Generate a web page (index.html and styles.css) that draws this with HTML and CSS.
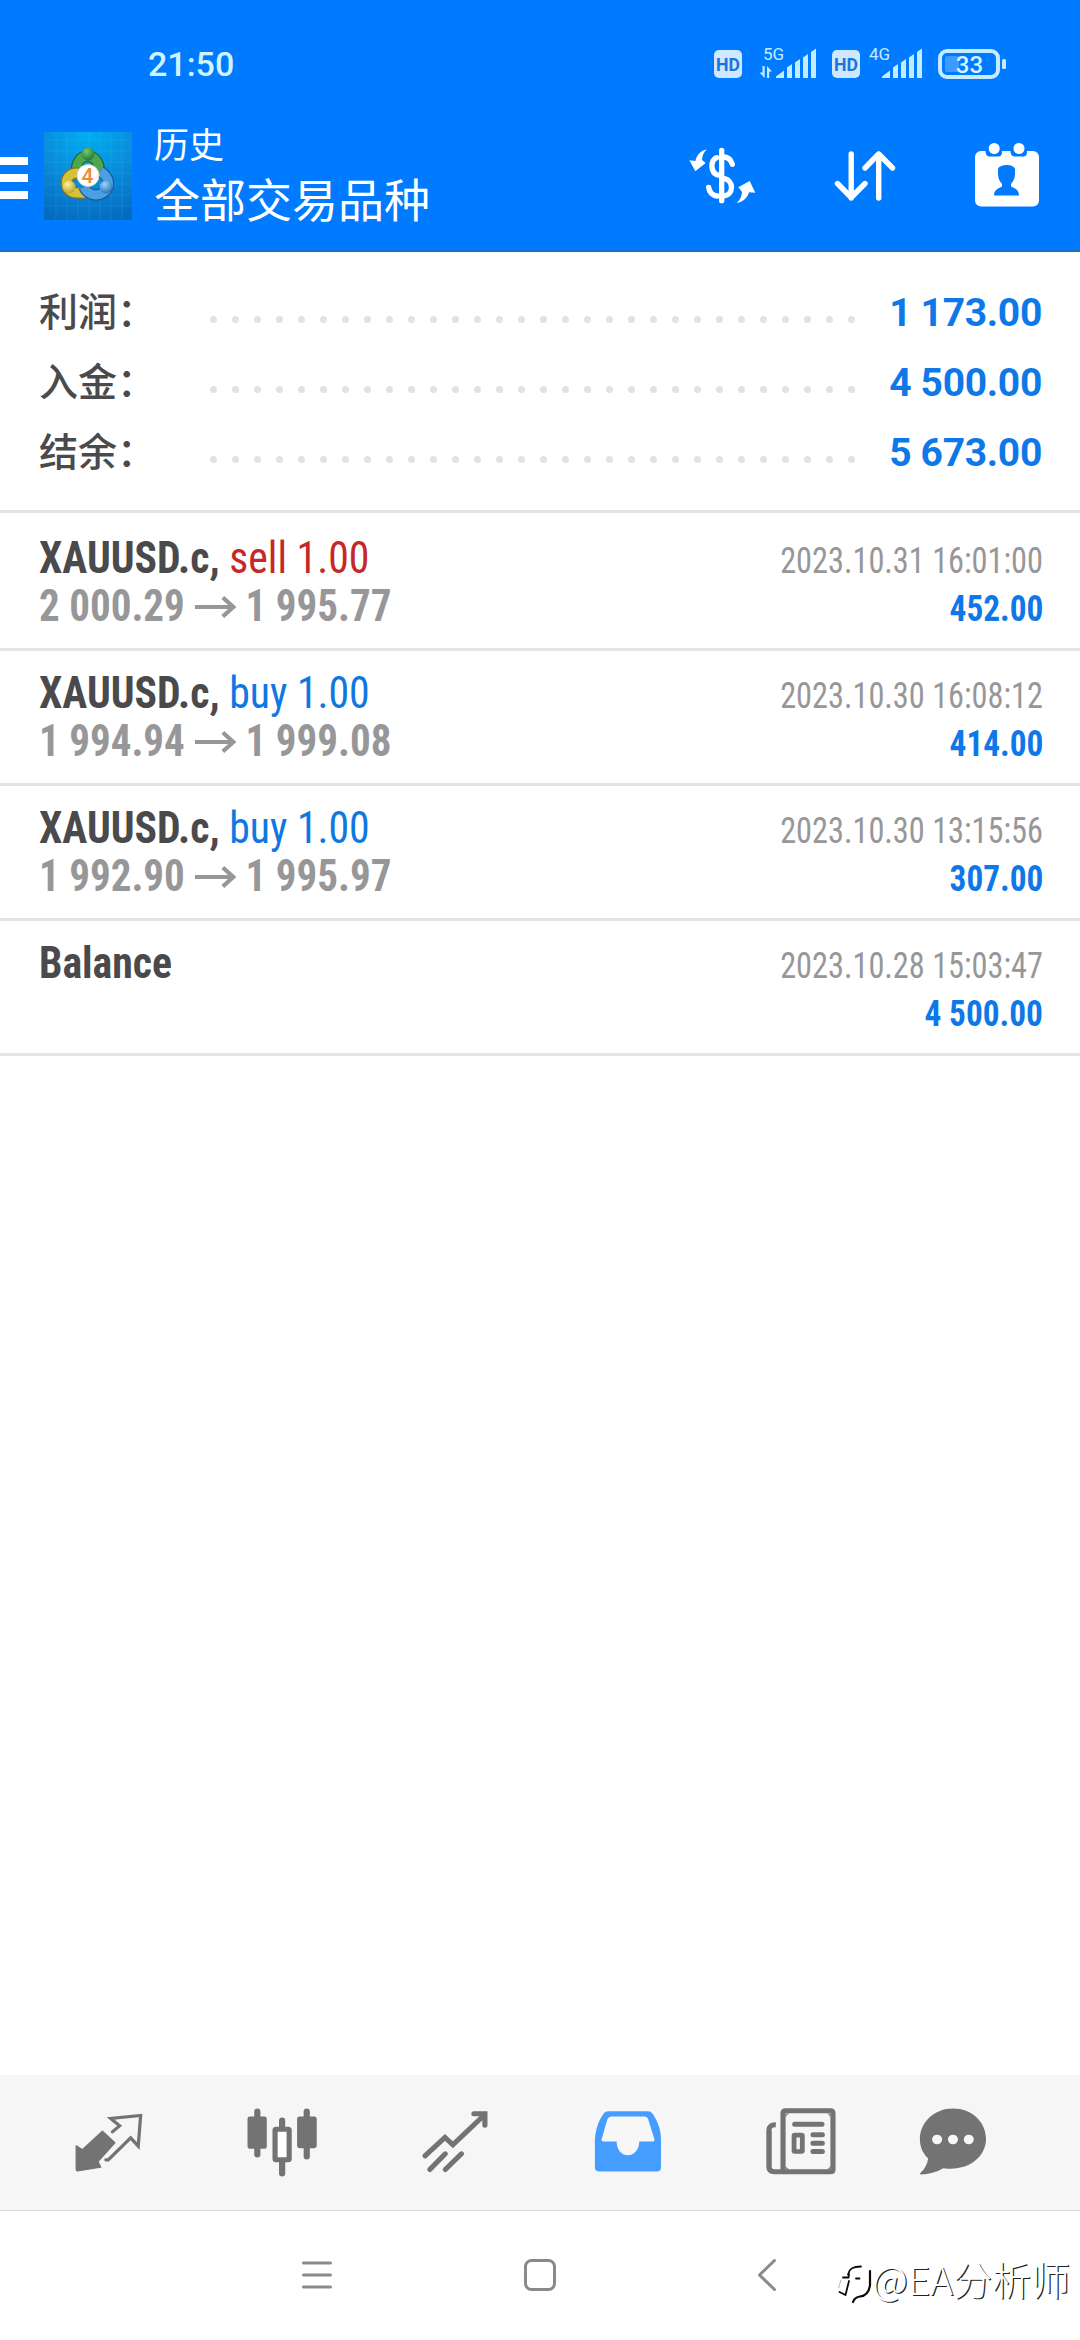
FILE: index.html
```html
<!DOCTYPE html>
<html lang="zh-CN">
<head>
<meta charset="utf-8">
<title>历史</title>
<link rel="stylesheet" href="styles.css">
</head>
<body>
<div class="screen">
  <header class="top">
    <div class="status">
      <span class="clock">21:50</span>
      <svg class="status-icons" viewBox="704 40 312 48" width="312" height="48">
        <g fill="#cfe8ff">
          <rect x="714" y="50" width="28" height="28" rx="5"/>
          <rect x="832" y="50" width="28" height="28" rx="5"/>
        </g>
        <g class="hd"><text x="728" y="70.500" textLength="24" lengthAdjust="spacingAndGlyphs">HD</text><text x="846" y="70.500" textLength="24" lengthAdjust="spacingAndGlyphs">HD</text></g>
        <g class="net"><text x="763" y="59.500">5G</text><text x="869" y="59.500">4G</text></g>
        <g fill="#c4ecff">
          <path d="M776 78V76.500L784 70.500V78ZM787 78V67.500L792 64V78ZM795 78V62.500L800 59V78ZM803 78V57.500L808 54V78ZM811 78V52L816 48.500V78Z"/>
          <path d="M882 78V76.500L890 70.500V78ZM893 78V67.500L898 64V78ZM901 78V62.500L906 59V78ZM909 78V57.500L914 54V78ZM917 78V52L922 48.500V78Z"/>
          <path d="M762.500 66H764.700V78L759.500 72.500H762.500ZM767 78V66L772 71.500H769.200V78Z"/>
          <rect x="1002" y="59" width="4" height="10" rx="1.500"/>
        </g>
        <rect x="945" y="56" width="14" height="16" rx="2" fill="#3d9aff"/>
        <rect x="940" y="51" width="58" height="26" rx="7" fill="none" stroke="#c4ecff" stroke-width="4"/>
        <text class="level" x="969.500" y="73">33</text>
      </svg>
    </div>
    <div class="appbar">
      <div class="burger"><i></i><i></i><i></i></div>
      <svg class="logo" viewBox="0 0 88 88" width="88" height="88">
        <defs>
          <radialGradient id="sky" cx=".5" cy="0" r="1.100"><stop offset="0" stop-color="#00aef2"/><stop offset=".5" stop-color="#0a8bdb"/><stop offset="1" stop-color="#0467bd"/></radialGradient>
          <radialGradient id="gr" cx=".4" cy=".3" r=".8"><stop offset="0" stop-color="#7cc474"/><stop offset="1" stop-color="#14702c"/></radialGradient>
          <radialGradient id="ye" cx=".4" cy=".3" r=".8"><stop offset="0" stop-color="#fff0a0"/><stop offset="1" stop-color="#b59a10"/></radialGradient>
          <radialGradient id="bl" cx=".4" cy=".3" r=".8"><stop offset="0" stop-color="#9ad4fa"/><stop offset="1" stop-color="#1868b4"/></radialGradient>
        </defs>
        <rect width="88" height="88" fill="url(#sky)"/>
        <path d="M12 0V88M23 0V88M34 0V88M45 0V88M56 0V88M67 0V88M78 0V88M0 8H88M0 19H88M0 30H88M0 41H88M0 52H88M0 63H88M0 74H88" stroke="#4cc4f4" stroke-opacity=".16"/>
        <path d="M33 42C29 18 58 18 55 42" fill="none" stroke="#1d6a35" stroke-width="11.500"/>
        <path d="M33 42C29 18 58 18 55 42" fill="none" stroke="#4fa64f" stroke-width="9"/>
        <path d="M34 41C19 40 18 61 34 61H42" fill="none" stroke="#84771a" stroke-width="11.500"/>
        <path d="M34 41C19 40 18 61 34 61H42" fill="none" stroke="#d6c23a" stroke-width="9"/>
        <path d="M40 55C46 69 68 63 64 48C62 43 60 42 56 39" fill="none" stroke="#175a9d" stroke-width="11.500"/>
        <path d="M40 55C46 69 68 63 64 48C62 43 60 42 56 39" fill="none" stroke="#4c9fe0" stroke-width="9"/>
        <circle cx="44" cy="22" r="6.500" fill="url(#gr)"/>
        <circle cx="25" cy="55" r="6.500" fill="url(#ye)"/>
        <circle cx="62" cy="55" r="6.500" fill="url(#bl)"/>
        <circle cx="44" cy="43.500" r="11" fill="#fff" stroke="#d9d5c5" stroke-width="1"/>
        <text class="four" x="43.500" y="51">4</text>
      </svg>
      <div class="titles">
        <div class="title">历史</div>
        <div class="subtitle">全部交易品种</div>
      </div>
      <div class="actions">
        <svg viewBox="0 0 270 240" width="90" height="80" fill="none" stroke="#fff" stroke-width="16" stroke-linecap="round">
          <path d="M125 46V197"/>
          <path d="M157 88C153 74 142 66 129 66M110 68C91 74 90 112 113 120M129 130C164 134 162 182 129 183M86 157C88 172 98 181 112 183"/>
          <path d="M81 43C71 51 67 62 66 75L77 84L46 109L28 76L46 78C51 60 61 47 81 43ZM170 204C180 196 185 185 186 171L175 157L209 138L226 173L207 172C202 189 190 201 170 204Z" fill="#fff" stroke="none"/>
        </svg>
        <svg viewBox="825 135 80 80" width="80" height="80" fill="none" stroke="#fff" stroke-width="5.400" stroke-linecap="round" stroke-linejoin="round">
          <path d="M851.200 154V198M837.500 183.500L851.200 197.500L865 183.500M878.700 198V154M865 168L878.700 154L892.500 168"/>
        </svg>
        <svg viewBox="967 135 80 80" width="80" height="80">
          <rect x="975" y="151" width="64" height="55.500" rx="6" fill="#fff"/>
          <path d="M985.500 151V152Q986 156.500 990 156.500H998Q1002 156.500 1002 152V151ZM1010.500 151V152Q1011 156.500 1015 156.500H1023Q1027 156.500 1027 152V151Z" fill="#007aff"/>
          <circle cx="994.200" cy="148.500" r="5.500" fill="#fff"/><circle cx="1019" cy="148.500" r="5.500" fill="#fff"/>
          <path d="M994 195.500C994 190 998 188.500 1002 186.500V184C999.500 181 998 178 998 174V169C999 166 1003 165 1007 165C1011 165 1014 166.500 1015 169V174C1015 178 1013.500 181 1011 184V186.500C1015 188.500 1019 190 1019 195.500Z" fill="#007aff"/>
        </svg>
      </div>
    </div>
  </header>

  <section class="summary">
    <div class="sum"><span class="label">利润：</span><svg class="dots" width="645" height="70"><path d="M3.500 41.500H645"/></svg><span class="value">1 173.00</span></div>
    <div class="sum"><span class="label">入金：</span><svg class="dots" width="645" height="70"><path d="M3.500 41.500H645"/></svg><span class="value">4 500.00</span></div>
    <div class="sum"><span class="label">结余：</span><svg class="dots" width="645" height="70"><path d="M3.500 41.500H645"/></svg><span class="value">5 673.00</span></div>
  </section>

  <main class="deals">
    <article class="deal">
      <div class="line"><span class="symbol">XAUUSD.c, <span class="sell">sell 1.00</span></span><time>2023.10.31 16:01:00</time></div>
      <div class="line"><span class="prices">2 000.29<svg class="arrow" viewBox="0 0 42 24" preserveAspectRatio="none"><path d="M0 12H39M28 2.500L38.500 12L28 21.500"/></svg>1 995.77</span><span class="profit">452.00</span></div>
    </article>
    <article class="deal">
      <div class="line"><span class="symbol">XAUUSD.c, <span class="buy">buy 1.00</span></span><time>2023.10.30 16:08:12</time></div>
      <div class="line"><span class="prices">1 994.94<svg class="arrow" viewBox="0 0 42 24" preserveAspectRatio="none"><path d="M0 12H39M28 2.500L38.500 12L28 21.500"/></svg>1 999.08</span><span class="profit">414.00</span></div>
    </article>
    <article class="deal">
      <div class="line"><span class="symbol">XAUUSD.c, <span class="buy">buy 1.00</span></span><time>2023.10.30 13:15:56</time></div>
      <div class="line"><span class="prices">1 992.90<svg class="arrow" viewBox="0 0 42 24" preserveAspectRatio="none"><path d="M0 12H39M28 2.500L38.500 12L28 21.500"/></svg>1 995.97</span><span class="profit">307.00</span></div>
    </article>
    <article class="deal">
      <div class="line"><span class="symbol">Balance</span><time>2023.10.28 15:03:47</time></div>
      <div class="line"><span class="prices">&nbsp;</span><span class="profit">4 500.00</span></div>
    </article>
  </main>

  <nav class="tabs">
    <svg viewBox="199 127.500 232.300 240" preserveAspectRatio="none">
      <path d="M296 212L332 247L283 303L291 320L224 331Q220 331 220 326V256L238 268Z" fill="#737373" stroke="#737373" stroke-width="4" stroke-linejoin="round"/>
      <path d="M325 214L346 196L320 174L407 165L400 257L378 232L313 298H306" fill="none" stroke="#737373" stroke-width="9.500" stroke-linecap="round" stroke-linejoin="miter"/>
    </svg>
    <svg viewBox="700 127.500 232.300 240" preserveAspectRatio="none">
      <path d="M744.500 153V282M888 153V288M816.500 180V205M816.500 300V339" stroke="#737373" stroke-width="18" stroke-linecap="round"/>
      <rect x="716" y="168" width="56" height="97" rx="7" fill="#737373"/><rect x="860" y="168" width="57" height="95" rx="7" fill="#737373"/>
      <rect x="796" y="206" width="41" height="92" rx="3" fill="#fff" stroke="#737373" stroke-width="15"/>
    </svg>
    <svg viewBox="1202 127.500 232.300 240" preserveAspectRatio="none" fill="none" stroke="#737373" stroke-width="15" stroke-linecap="round" stroke-linejoin="miter">
      <path d="M1231 286L1289 231L1312 253L1404 163M1373 159.500H1405V194"/>
      <path d="M1245 327L1290 280M1290 327L1337 280"/>
    </svg>
    <svg viewBox="138 127.500 232.300 240" preserveAspectRatio="none">
      <path d="M184 158Q189 152 197 152H312Q320 152 325 159C341 182 350 209 350 239V320Q350 333 337 333H172Q158 333 158 320V239C159 209 168 181 184 158Z" fill="#449dff"/>
      <path d="M207 168H302Q309 168 312 174L331 236Q332 243 325 243H287C286 297 222 299 221 243H184Q175 243 178 235L194 177Q198 168 207 168Z" fill="#f7f7f7"/>
    </svg>
    <svg viewBox="642 127.500 232.300 240" preserveAspectRatio="none" fill="none" stroke="#737373" stroke-width="15">
      <path d="M685 193Q665 192 665 210V319Q665 334 680 334H843Q851 334 851 326V159Q851 151 843 151H714Q706 151 706 159V334"/>
      <path d="M740 191H819M793 223H820M793 248H820M793 273H820" stroke-linecap="round"/>
      <rect x="738" y="224" width="24" height="49" rx="2" stroke-width="14"/>
      <path d="M676 326Q671 326 671 319V210M714 319Q714 326 722 326M843 318Q843 326 836 326M714 168Q714 160 722 160M843 168Q843 160 836 160" stroke-width="3"/>
    </svg>
    <svg class="chat" viewBox="1083 127.500 232.300 240" preserveAspectRatio="none">
      <path d="M1199 144C1253 144 1295 184 1295 235C1295 292 1240 334 1171 323C1151 335 1128 341 1107 342Q1101 341 1105 337C1117 326 1125 310 1127 294C1111 278 1103 258 1103 236C1103 185 1145 144 1199 144Z" fill="#737373"/>
      <g fill="#f7f7f7"><circle cx="1153" cy="237" r="14.500"/><circle cx="1199" cy="237" r="14.500"/><circle cx="1245" cy="237" r="14.500"/></g>
    </svg>
  </nav>

  <div class="sysnav">
    <svg viewBox="0 0 34 34" width="34" height="34"><path d="M3.500 5H30.500M3.500 17H30.500M3.500 29H30.500"/></svg>
    <svg viewBox="0 0 34 34" width="34" height="34"><rect x="2.500" y="2.500" width="29" height="29" rx="6"/></svg>
    <svg viewBox="0 0 34 34" width="34" height="34"><path d="M24.500 2.500L9.500 17L24.500 31.500"/></svg>
    <div class="watermark">
      <svg viewBox="0 0 36 44" width="36" height="44" fill="none" stroke="#0a0a0a" stroke-width="1.800" stroke-linecap="round">
        <path d="M12 12.500C13 6.500 17 4.500 25 4.500M7 15.500H12.500L13 12M20 16.500H23.500M13 19L9.500 33L3.500 30"/>
        <path d="M34 9V23C33 31 29 34 24 34.500C20 35 18 37 17 40" stroke-width="2.200"/>
        <path d="M5 18L2.500 26" stroke="#b5b5b5" stroke-width="1"/>
      </svg>
      <span>@EA分析师</span>
    </div>
  </div>
</div>
</body>
</html>
```
FILE: styles.css
```css
* { box-sizing: border-box; }
body {
  margin: 0;
  background: #fff;
  font-family: "Roboto", "Noto Sans CJK SC", sans-serif;
}
.screen {
  width: 1080px;
  height: 2340px;
  display: flex;
  flex-direction: column;
  overflow: hidden;
}

/* header */
.top {
  height: 252px;
  background: #007aff;
  border-bottom: 2px solid #1b70c6;
}
.status {
  height: 126px;
  padding: 40px 64px 0 148px;
  display: flex;
  justify-content: space-between;
  align-items: flex-start;
}
.clock {
  color: #d0f4ff;
  font-size: 34px;
  font-weight: 500;
  line-height: 49px;
}
.hd text {
  font: 700 18px "Roboto", sans-serif;
  text-anchor: middle;
  fill: #1b74dd;
}
.net text {
  font: 400 17px "Roboto", sans-serif;
  fill: #c4ecff;
}
.level {
  font: 500 24px "Roboto", sans-serif;
  text-anchor: middle;
  fill: #d8f2ff;
}
.appbar {
  height: 124px;
  display: flex;
  align-items: flex-start;
}
.burger {
  width: 28px;
  margin: 31px 16px 0 0;
  display: flex;
  flex-direction: column;
  gap: 9px;
}
.burger i {
  height: 8px;
  background: #fff;
}
.logo { margin-top: 6px; }
.four {
  font: 500 21px "Roboto", sans-serif;
  text-anchor: middle;
  fill: #ef8a3c;
}
.titles {
  margin: -3px 0 0 22px;
  color: #fff;
  font-family: "Noto Sans CJK SC", sans-serif;
}
.title {
  font-size: 35px;
  line-height: 40px;
}
.subtitle {
  margin-top: 8px;
  font-size: 46px;
  line-height: 53px;
}
.actions {
  margin: 9px 33px 0 auto;
  display: flex;
  gap: 60px;
}
.actions svg:nth-child(1) { margin-right: -5px; }
.actions svg:nth-child(3) { margin-left: 2px; }

/* totals */
.summary {
  height: 261px;
  padding: 26px 38px 0 39px;
  border-bottom: 3px solid #e3e3e3;
}
.sum {
  height: 70px;
  display: flex;
  line-height: 70px;
}
.label {
  width: 171px;
  font-family: "Noto Sans CJK SC", sans-serif;
  font-size: 39px;
  font-weight: 500;
  line-height: 62px;
  color: #4a4a4d;
}
.dots path {
  stroke: #e2e2e2;
  stroke-width: 7;
  stroke-linecap: round;
  stroke-dasharray: 0 22;
}
.value {
  margin-left: auto;
  font-size: 39px;
  font-weight: 700;
  letter-spacing: -0.3px;
  color: #0f78e8;
  white-space: nowrap;
}

/* deals */
.deals {
  flex: 1;
  padding-top: 3px;
  font-family: "Roboto Condensed", sans-serif;
}
.deal {
  height: 135px;
  padding: 18px 37px 0 39px;
  border-bottom: 3px solid #e3e3e3;
}
.line {
  height: 48px;
  display: flex;
  justify-content: space-between;
  align-items: baseline;
  line-height: 48px;
  white-space: nowrap;
}
.symbol, .prices {
  font-size: 44px;
  font-weight: 700;
  color: #4a4a4d;
  transform: scaleX(0.948);
  transform-origin: left;
}
.prices {
  color: #979799;
  transform: scaleX(0.933);
}
.sell, .buy { font-weight: 400; }
.sell { color: #c62828; }
.buy { color: #0f78e0; }
.arrow {
  width: 45px;
  height: 24px;
  margin: 0 9px 0 11px;
  vertical-align: 2px;
  fill: none;
  stroke: #979799;
  stroke-width: 4.2;
}
time {
  font-size: 36px;
  color: #979799;
  transform: scaleX(0.897);
  transform-origin: right;
}
.profit {
  font-size: 36px;
  font-weight: 700;
  color: #0f78e8;
  transform: scaleX(0.925);
  transform-origin: right;
}

/* bottom tabs */
.tabs {
  height: 136px;
  padding-left: 69px;
  display: flex;
  align-items: center;
  gap: 93px;
  background: #f6f6f6;
  border-bottom: 1px solid #dcdcdc;
}
.tabs svg {
  width: 80px;
  height: 80px;
  flex: none;
}
.tabs .chat { margin-left: -21px; }

.sysnav {
  position: relative;
  height: 129px;
  padding: 47px 0 0 300px;
  display: flex;
  align-items: flex-start;
  gap: 189px;
}
.sysnav > svg {
  fill: none;
  stroke: #8a8a8a;
  stroke-width: 3;
  stroke-linecap: round;
  stroke-linejoin: round;
}
.sysnav > svg:nth-child(3) { margin-left: 4px; }
.watermark {
  position: absolute;
  right: 10px;
  top: 38px;
  display: flex;
  align-items: center;
  color: #fff;
  font: 300 39px/48px "Noto Sans CJK SC", sans-serif;
  text-shadow: 1.2px 1.2px 0.4px #222;
}
.watermark svg {
  margin-top: 13px;
  overflow: visible;
}
```
